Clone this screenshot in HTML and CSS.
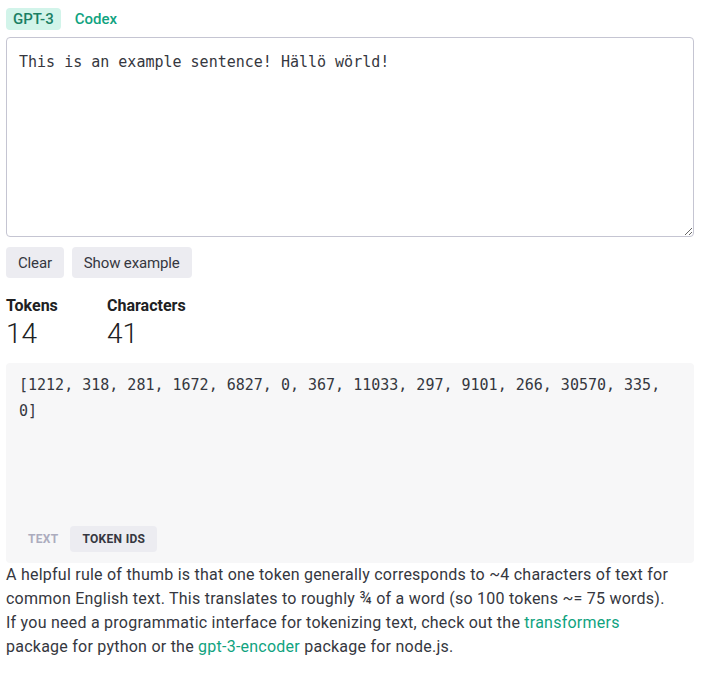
FILE: index.html
```html
<!DOCTYPE html>
<html>
<head>
<meta charset="utf-8">
<link rel="stylesheet" href="styles.css">
</head>
<body>
<div class="page">
  <div class="models">
    <span class="model active">GPT-3</span>
    <span class="model">Codex</span>
  </div>
  <textarea class="input">This is an example sentence! Hällö wörld!</textarea>
  <div class="actions">
    <button class="btn">Clear</button>
    <button class="btn">Show example</button>
  </div>
  <div class="stats">
    <div class="stat">
      <div class="stat-label">Tokens</div>
      <div class="stat-value">14</div>
    </div>
    <div class="stat">
      <div class="stat-label">Characters</div>
      <div class="stat-value">41</div>
    </div>
  </div>
  <div class="output">
    <div class="output-text">[1212, 318, 281, 1672, 6827, 0, 367, 11033, 297, 9101, 266, 30570, 335, 0]</div>
    <div class="view-tabs">
      <span class="view-tab">TEXT</span>
      <span class="view-tab selected">TOKEN IDS</span>
    </div>
  </div>
  <p class="note">A helpful rule of thumb is that one token generally corresponds to ~4 characters of text for common English text. This translates to roughly ¾ of a word (so 100 tokens ~= 75 words).<br>If you need a programmatic interface for tokenizing text, check out the <a class="link" href="#">transformers</a> package for python or the <a class="link" href="#">gpt-3-encoder</a> package for node.js.</p>
</div>
</body>
</html>
```

FILE: styles.css
```css
* { box-sizing: border-box; }
html, body { margin: 0; padding: 0; background: #fff; }
body {
  font-family: Roboto, "Liberation Sans", sans-serif;
  color: #353740;
}
.page {
  width: 688px;
  margin-left: 6px;
  padding-top: 8px;
  display: flex;
  flex-direction: column;
}
.models {
  display: flex;
  gap: 7px;
  height: 22px;
}
.model {
  display: inline-flex;
  align-items: center;
  padding: 0 7px;
  height: 22px;
  border-radius: 4px;
  font-size: 15px;
  font-weight: 500;
  color: #10a37f;
}
.model.active {
  background: #d2f4ea;
  color: #1a7f64;
}
.input {
  display: block;
  margin-top: 7px;
  width: 688px;
  height: 200px;
  border: 1px solid #c5c5d2;
  border-radius: 4px;
  padding: 12px 12px;
  font-family: "DejaVu Sans Mono", "Liberation Mono", monospace;
  font-size: 15px;
  line-height: 24px;
  color: #353740;
  resize: vertical;
  outline: none;
}
.actions {
  display: flex;
  gap: 8px;
  margin-top: 10px;
}
.btn {
  height: 31px;
  padding: 0 12px;
  border: none;
  border-radius: 4px;
  background: #ececf1;
  font-family: Roboto, "Liberation Sans", sans-serif;
  font-size: 15px;
  letter-spacing: -0.15px;
  color: #353740;
}
.stats {
  display: flex;
  margin-top: 18px;
}
.stat { min-width: 101px; }
.stat-label {
  font-size: 16px;
  font-weight: 700;
  line-height: 20px;
  color: #202123;
}
.stat-value {
  font-size: 28px;
  font-weight: 300;
  line-height: 35px;
  color: #202123;
}
.output {
  margin-top: 12px;
  height: 200px;
  background: #f7f7f8;
  border-radius: 4px;
  display: flex;
  flex-direction: column;
  justify-content: space-between;
  padding: 9px 13px 11px 10px;
}
.output-text {
  padding-left: 3px;
  font-family: "DejaVu Sans Mono", "Liberation Mono", monospace;
  font-size: 15px;
  line-height: 26px;
  color: #353740;
}
.view-tabs {
  display: flex;
  gap: 0;
}
.view-tab {
  display: inline-flex;
  align-items: center;
  height: 26px;
  padding: 0 12px;
  border-radius: 4px;
  font-size: 12px;
  font-weight: 700;
  letter-spacing: 0.3px;
  color: #acacbe;
}
.view-tab.selected {
  background: #ececf1;
  color: #353740;
}
.note {
  margin: 0;
  max-width: 670px;
  font-size: 16px;
  line-height: 24px;
  letter-spacing: 0.24px;
  color: #353740;
}
.link {
  color: #10a37f;
  text-decoration: none;
}
```
